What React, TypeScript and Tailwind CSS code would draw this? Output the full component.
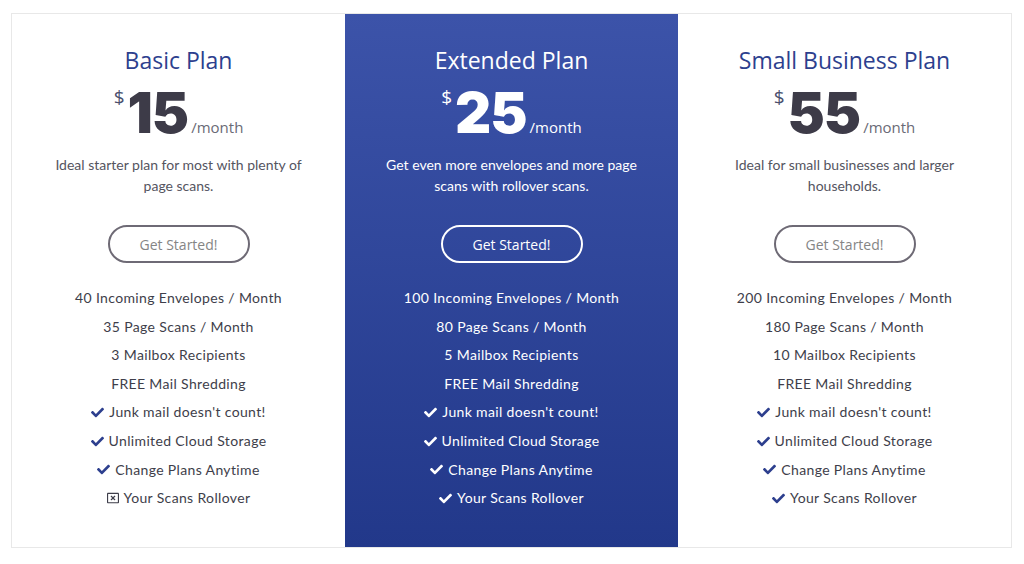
import { FaCheck, FaRegWindowClose } from 'react-icons/fa';

type Plan = {
  name: string;
  price: string;
  blurb: string[];
  features: string[];
  rollover: boolean;
  featured?: boolean;
};

const plans: Plan[] = [
  {
    name: 'Basic Plan',
    price: '15',
    blurb: ['Ideal starter plan for most with plenty of', 'page scans.'],
    features: ['40 Incoming Envelopes / Month', '35 Page Scans / Month', '3 Mailbox Recipients'],
    rollover: false,
  },
  {
    name: 'Extended Plan',
    price: '25',
    blurb: ['Get even more envelopes and more page', 'scans with rollover scans.'],
    features: ['100 Incoming Envelopes / Month', '80 Page Scans / Month', '5 Mailbox Recipients'],
    rollover: true,
    featured: true,
  },
  {
    name: 'Small Business Plan',
    price: '55',
    blurb: ['Ideal for small businesses and larger', 'households.'],
    features: ['200 Incoming Envelopes / Month', '180 Page Scans / Month', '10 Mailbox Recipients'],
    rollover: true,
  },
];

const checks = ["Junk mail doesn't count!", 'Unlimited Cloud Storage', 'Change Plans Anytime'];

const heading = { fontFamily: '"Open Sans", "Liberation Sans", sans-serif' };
const body = { fontFamily: 'Lato, "Open Sans", sans-serif' };

function PlanColumn({ plan }: { plan: Plan }) {
  const f = plan.featured;
  const iconCls = f ? 'text-white' : 'text-[#2d3f8e]';
  return (
    <div
      className={
        'flex flex-col items-center pt-[32px] pb-[34px] ' +
        (f ? 'bg-gradient-to-b from-[#3c53a9] to-[#22388a] text-white' : 'bg-white')
      }
    >
      <h2
        className={'text-[23px] leading-[28px] ' + (f ? 'text-white' : 'text-[#2d3f8e]')}
        style={heading}
      >
        {plan.name}
      </h2>
      <div className="mt-[11px] flex items-baseline">
        <span
          className={'self-start mt-[3px] mr-[3px] text-[19px] leading-none ' + (f ? 'text-white' : 'text-[#4a4f6e]')}
          style={heading}
        >
          $
        </span>
        <span
          className={'text-[56px] leading-none font-black tracking-[-1px] ' + (f ? 'text-white' : 'text-[#3d3b48]')}
          style={{ fontFamily: 'Inter, sans-serif' }}
        >
          {plan.price}
        </span>
        <span className={'ml-[3px] text-[15px] ' + (f ? 'text-white' : 'text-[#6a6a76]')} style={heading}>
          /month
        </span>
      </div>
      <div
        className={'mt-[13px] text-center text-[14px] leading-[21px] ' + (f ? 'text-white' : 'text-[#55555f]')}
        style={body}
      >
        {plan.blurb.map((l) => (
          <div key={l}>{l}</div>
        ))}
      </div>
      <button
        className={
          'mt-[29px] h-[38px] w-[142px] rounded-full border-2 text-[14px] ' +
          (f ? 'border-white text-white' : 'border-[#6e6a75] text-[#858585]')
        }
        style={heading}
      >
        Get Started!
      </button>
      <ul
        className={'mt-[21px] flex flex-col items-center text-[14px] leading-[28.6px] tracking-[0.35px] ' + (f ? 'text-white' : 'text-[#3e3e4a]')}
        style={body}
      >
        {plan.features.map((t) => (
          <li key={t}>{t}</li>
        ))}
        <li>FREE Mail Shredding</li>
        {checks.map((t) => (
          <li key={t} className="flex items-center gap-[5px]">
            <FaCheck className={iconCls} size={13} />
            {t}
          </li>
        ))}
        <li className="flex items-center gap-[5px]">
          {plan.rollover ? (
            <FaCheck className={iconCls} size={13} />
          ) : (
            <FaRegWindowClose className="text-[#3e3e4a]" size={12} />
          )}
          Your Scans Rollover
        </li>
      </ul>
    </div>
  );
}

export default function App() {
  return (
    <div className="h-[564px] w-[1024px] bg-white pl-[11px] pt-[13px]">
      <div className="grid w-[1001px] grid-cols-3 border border-[#e8e8e8]">
        {plans.map((p) => (
          <PlanColumn key={p.name} plan={p} />
        ))}
      </div>
    </div>
  );
}
